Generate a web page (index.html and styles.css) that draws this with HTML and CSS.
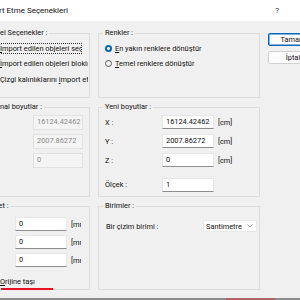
FILE: index.html
```html
<!DOCTYPE html>
<html lang="tr">
<head>
    <meta charset="UTF-8">
    <title>İmport Etme Seçenekleri</title>
    <link rel="stylesheet" href="styles.css">
</head>
<body>
    <div class="titlebar">
        <span class="title">rt Etme Seçenekleri</span>
        <span class="help">?</span>
    </div>
    <div class="dialog">
        <div class="groups">
            <div class="row row-top">
                <fieldset class="group group-left">
                    <legend>Genel Seçenekler :</legend>
                    <div class="checks">
                        <label class="check-item"><span class="box"></span><span class="text focus"><u>İ</u>mport edilen objeleri seç</span></label>
                        <label class="check-item"><span class="box"></span><span class="text"><u>İ</u>mport edilen objeleri bloklı</span></label>
                        <label class="check-item"><span class="box"></span><span class="text">Çizgi kalınlıklarını <u>i</u>mport et</span></label>
                    </div>
                </fieldset>
                <fieldset class="group group-right">
                    <legend>Renkler :</legend>
                    <div class="radios">
                        <label class="radio-item"><span class="radio on"></span><span><u>E</u>n yakın renklere dönüştür</span></label>
                        <label class="radio-item"><span class="radio"></span><span><u>T</u>emel renklere dönüştür</span></label>
                    </div>
                </fieldset>
            </div>
            <div class="row row-mid">
                <fieldset class="group group-left">
                    <legend>Orijinal boyutlar :</legend>
                    <div class="orig">
                        <div class="field disabled">16124.42462</div>
                        <div class="field disabled">2007.86272</div>
                        <div class="field disabled">0</div>
                    </div>
                </fieldset>
                <fieldset class="group group-right">
                    <legend>Yeni boyutlar :</legend>
                    <div class="dims">
                        <span class="lbl">X :</span><div class="field">16124.42462</div><span class="unit">[cm]</span>
                        <span class="lbl">Y :</span><div class="field">2007.86272</div><span class="unit">[cm]</span>
                        <span class="lbl">Z :</span><div class="field">0</div><span class="unit">[cm]</span>
                        <span class="lbl scale">Ölçek :</span><div class="field scale">1</div><span></span>
                    </div>
                </fieldset>
            </div>
            <div class="row row-bottom">
                <fieldset class="group group-left">
                    <legend>Ofset :</legend>
                    <div class="offset">
                        <div class="off-row"><div class="field">0</div><span class="unit clip">[mm]</span></div>
                        <div class="off-row"><div class="field">0</div><span class="unit clip">[mm]</span></div>
                        <div class="off-row"><div class="field">0</div><span class="unit clip">[mm]</span></div>
                    </div>
                    <label class="check-item origin"><span class="box"></span><span class="text"><u>O</u>rijine taşı</span></label>
                    <div class="mark"></div>
                </fieldset>
                <fieldset class="group group-right">
                    <legend>Birimler :</legend>
                    <div class="units-row">
                        <span>Bir çizim birimi :</span>
                        <div class="select">
                            <span>Santimetre</span>
                            <svg width="6" height="4" viewBox="0 0 6 4"><path d="M0.5 0.5 L3 3 L5.5 0.5" fill="none" stroke="#8a8a8a" stroke-width="0.8"/></svg>
                        </div>
                    </div>
                </fieldset>
            </div>
        </div>
        <div class="buttons">
            <div class="btn primary">Tamam</div>
            <div class="btn">İptal</div>
        </div>
    </div>
    <div class="taskbar"></div>
</body>
</html>
```

FILE: styles.css
```css
body {
    margin: 0;
    width: 300px;
    height: 300px;
    overflow: hidden;
    display: flex;
    flex-direction: column;
    background-color: #f0f0f0;
    font-family: Roboto, "Liberation Sans", sans-serif;
    font-size: 7.4px;
    color: #111;
}
.titlebar {
    height: 21px;
    flex-shrink: 0;
    display: flex;
    align-items: center;
    justify-content: space-between;
    padding-right: 21px;
    background-color: #ffffff;
}
.title {
    margin-left: -1px;
    font-size: 8px;
}
.help {
    font-size: 8px;
    color: #333;
}
.dialog {
    display: flex;
    gap: 8px;
    margin-left: -20px;
    padding-top: 6px;
}
.groups {
    flex-shrink: 0;
    display: flex;
    flex-direction: column;
    gap: 3px;
}
.row {
    display: flex;
    gap: 8px;
}
.row-top .group { height: 71px; }
.row-mid .group { height: 96px; }
.row-bottom .group { height: 90px; }
.group {
    flex-shrink: 0;
    box-sizing: border-box;
    margin: 0;
    padding: 0;
    min-width: 0;
    border: 1px solid #dcdcdc;
}
.group-left { width: 110px; }
.group-right { width: 162px; }
legend {
    margin-left: 4px;
    padding: 0 2px;
    line-height: 12px;
}

/* checkboxes */
.checks {
    display: flex;
    flex-direction: column;
    gap: 3.5px;
    padding: 3px 0 0 4px;
}
.check-item {
    display: flex;
    align-items: center;
    gap: 4px;
    height: 12px;
}
.box {
    width: 9px;
    height: 9px;
    flex-shrink: 0;
    border: 1px solid #333;
    border-radius: 2px;
    background: #fff;
}
.check-item .text {
    max-width: 88px;
    overflow: hidden;
    white-space: nowrap;
}
.check-item .focus {
    width: 81px;
    outline: 1px dotted #333;
}

/* radios */
.radios {
    display: flex;
    flex-direction: column;
    gap: 3.5px;
    padding: 3px 0 0 6px;
}
.radio-item {
    display: flex;
    align-items: center;
    gap: 3px;
    height: 12px;
}
.radio {
    width: 7px;
    height: 7px;
    box-sizing: border-box;
    border: 1px solid #5a5a5a;
    border-radius: 50%;
    background: #f6f6f6;
}
.radio.on {
    border: none;
    background: radial-gradient(circle, #ffffff 0 1.2px, #0067c0 1.7px);
}

/* text fields */
.field {
    box-sizing: border-box;
    width: 52px;
    height: 14px;
    padding: 1px 3px 0;
    line-height: 10px;
    background: #ffffff;
    border: 1px solid #e6e6e6;
    border-bottom-color: #8d8d8d;
    white-space: nowrap;
}
.field.disabled {
    width: 50px;
    height: 15px;
    background: #f4f4f4;
    border-color: #e1e1e1;
    color: #8a8a8a;
}
.orig {
    display: flex;
    flex-direction: column;
    align-items: flex-end;
    gap: 4px;
    padding: 2px 6px 0 0;
}
.dims {
    display: grid;
    grid-template-columns: 53px 52px auto;
    grid-auto-rows: 14px;
    column-gap: 4px;
    row-gap: 5px;
    padding: 2px 0 0 6px;
}
.lbl, .unit {
    padding-top: 3px;
    line-height: 10px;
}
.lbl.scale, .field.scale {
    margin-top: 6px;
}
.lbl.scale {
    padding-top: 2px;
}
.offset {
    display: flex;
    flex-direction: column;
    gap: 4px;
    padding: 5px 0 0 34px;
}
.off-row {
    display: flex;
    gap: 4px;
}
.unit.clip {
    width: 10px;
    overflow: hidden;
    white-space: nowrap;
}
.origin {
    margin: 8px 0 0 4px;
}
.mark {
    width: 52px;
    height: 2px;
    margin: 1px 0 -3px 20px;
    background: #e81123;
}

/* units */
.units-row {
    display: flex;
    justify-content: space-between;
    align-items: center;
    padding: 8px 2px 0 7px;
}
.select {
    box-sizing: border-box;
    width: 54px;
    height: 12px;
    display: flex;
    align-items: center;
    justify-content: space-between;
    padding: 0 3px 0 2px;
    background: #ffffff;
    border: 1px solid #e8e8e8;
}

/* buttons */
.buttons {
    flex-shrink: 0;
    display: flex;
    flex-direction: column;
    gap: 5px;
    margin-top: 6px;
}
.btn {
    box-sizing: border-box;
    width: 50px;
    height: 13px;
    line-height: 11px;
    text-align: center;
    background: #fdfdfd;
    border: 1px solid #d0d0d0;
    border-radius: 2px;
}
.btn.primary {
    border-color: #0067c0;
    box-shadow: inset 0 0 0 0.5px #0067c0;
}

.taskbar {
    margin-top: auto;
    height: 2px;
    background: linear-gradient(to right, #8c8c8c 0 226px, #b06464 226px 275px, #8c8c8c 275px);
}
```
